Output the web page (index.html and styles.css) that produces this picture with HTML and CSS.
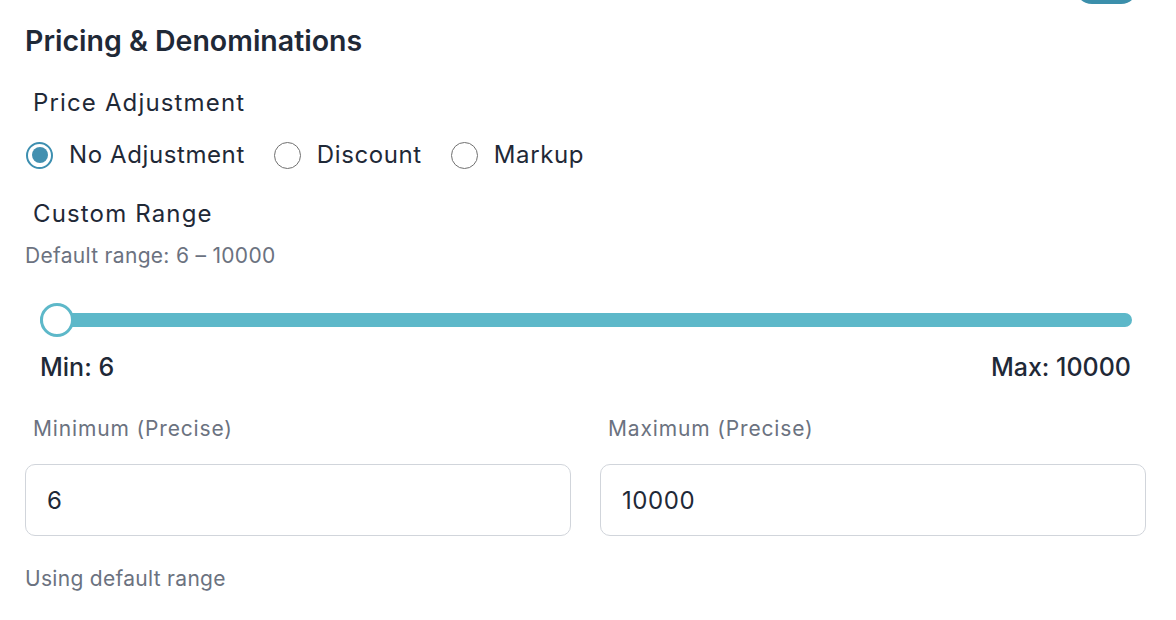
FILE: index.html
```html
<!DOCTYPE html>
<html lang="en">
<head>
<meta charset="utf-8">
<title>Pricing &amp; Denominations</title>
<link rel="stylesheet" href="styles.css">
</head>
<body>
<div class="top-btn"></div>
<section class="panel">
  <h2 class="title">Pricing &amp; Denominations</h2>

  <div class="field-label adj-label">Price Adjustment</div>
  <div class="radio-row">
    <label class="radio-opt">
      <span class="radio checked"><span class="dot"></span></span>
      <span class="radio-text">No Adjustment</span>
    </label>
    <label class="radio-opt">
      <span class="radio"></span>
      <span class="radio-text">Discount</span>
    </label>
    <label class="radio-opt">
      <span class="radio"></span>
      <span class="radio-text">Markup</span>
    </label>
  </div>

  <div class="field-label range-label">Custom Range</div>
  <div class="hint default-hint">Default range: 6 – 10000</div>

  <div class="slider">
    <div class="track"></div>
    <div class="thumb"></div>
  </div>
  <div class="minmax">
    <span>Min: 6</span>
    <span>Max: 10000</span>
  </div>

  <div class="inputs">
    <div class="col">
      <div class="input-label">Minimum (Precise)</div>
      <div class="input">6</div>
    </div>
    <div class="col">
      <div class="input-label">Maximum (Precise)</div>
      <div class="input">10000</div>
    </div>
  </div>

  <div class="hint using-hint">Using default range</div>
</section>
</body>
</html>
```

FILE: styles.css
```css
* { box-sizing: border-box; }

html, body {
  margin: 0;
  padding: 0;
  background: #ffffff;
}

body {
  font-family: Inter, "Noto Sans", "Liberation Sans", sans-serif;
  color: #1f2937;
  position: relative;
  width: 1176px;
  height: 620px;
  overflow: hidden;
}

.top-btn {
  position: absolute;
  top: -30px;
  left: 1075px;
  width: 63px;
  height: 34px;
  border-radius: 17px;
  background: #3b8fab;
}

.panel {
  padding: 25px 30px 0 25px;
}

.title {
  margin: 0;
  font-size: 28.5px;
  font-weight: 600;
  line-height: 32px;
  color: #1f2937;
}

.field-label {
  padding-left: 8px;
  font-size: 24px;
  line-height: 32px;
  letter-spacing: 1.15px;
  color: #1f2937;
}

.adj-label { margin-top: 30px; }

.radio-row {
  margin-top: 20px;
  display: flex;
  align-items: center;
  gap: 28px;
  height: 32px;
}

.radio-opt {
  display: flex;
  align-items: center;
  gap: 16px;
  padding-left: 1px;
}

.radio {
  width: 27px;
  height: 27px;
  border-radius: 50%;
  border: 1.5px solid #707070;
  display: flex;
  align-items: center;
  justify-content: center;
  flex: none;
}

.radio.checked {
  border: 2px solid #3d8fb0;
}

.radio .dot {
  width: 16px;
  height: 16px;
  border-radius: 50%;
  background: #4390b0;
}

.radio-text {
  font-size: 24px;
  line-height: 32px;
  letter-spacing: 0.6px;
  color: #1f2937;
}

.range-label { margin-top: 27px; }

.hint {
  font-size: 21px;
  line-height: 28px;
  letter-spacing: 0.3px;
  color: #6b7280;
}

.default-hint { margin-top: 12px; }

.slider {
  margin-top: 33px;
  padding: 0 14px 0 15px;
  height: 34px;
  display: flex;
  align-items: center;
  position: relative;
}

.track {
  flex: 1;
  height: 14px;
  border-radius: 7px;
  background: #5db8c9;
}

.thumb {
  position: absolute;
  left: 15px;
  top: 0;
  width: 34px;
  height: 34px;
  border-radius: 50%;
  background: #ffffff;
  border: 3px solid #5db8c9;
}

.minmax {
  margin-top: 14px;
  padding: 0 15px 0 15px;
  display: flex;
  justify-content: space-between;
  font-size: 25px;
  font-weight: 500;
  line-height: 32px;
  color: #1f2937;
}

.inputs {
  margin-top: 32px;
  display: grid;
  grid-template-columns: 1fr 1fr;
  column-gap: 29px;
}

.input-label {
  padding-left: 8px;
  font-size: 21px;
  line-height: 28px;
  letter-spacing: 0.85px;
  color: #6b7280;
}

.input {
  margin-top: 21px;
  height: 72px;
  border: 1px solid #d1d5db;
  border-radius: 10px;
  padding-left: 21px;
  display: flex;
  align-items: center;
  font-size: 24px;
  letter-spacing: 0.6px;
  color: #1f2937;
}

.using-hint { margin-top: 29px; }
```
